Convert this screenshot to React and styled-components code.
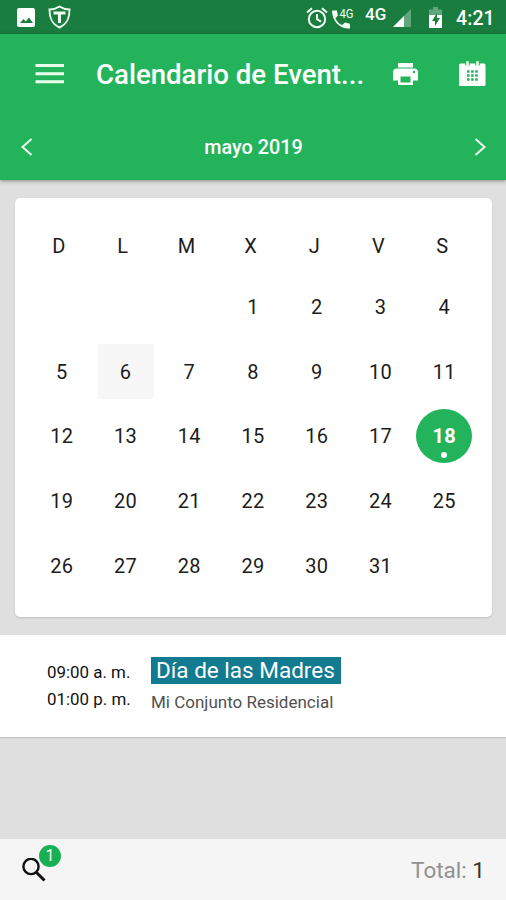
import React from 'react';
import styled, { createGlobalStyle } from 'styled-components';

const Global = createGlobalStyle`
  * { box-sizing: border-box; }
  body { margin: 0; background: #dfdfdf; font-family: Roboto, sans-serif; }
  svg { display: block; flex: none; }
`;

const Screen = styled.div`
  width: 506px;
  height: 900px;
  display: flex;
  flex-direction: column;
  overflow: hidden;
  background: #dfdfdf;
`;

const StatusBar = styled.div`
  height: 34px;
  flex: none;
  display: flex;
  align-items: flex-start;
  background: #197d3f;
  color: #fff;
`;

const StatusIcon = styled.svg`
  margin-left: ${(p) => p.$left}px;
  margin-top: ${(p) => p.$top}px;
`;

const Network = styled.span`
  width: 22px;
  margin: 5px 0 0 7px;
  font-size: 17px;
  font-weight: 500;
  line-height: 18px;
  letter-spacing: 0.2px;
  white-space: nowrap;
`;

const Clock = styled.span`
  margin: 8px 0 0 14px;
  font-size: 19.5px;
  font-weight: 500;
  line-height: 22px;
  letter-spacing: 0.1px;
`;

const Header = styled.header`
  height: 146px;
  flex: none;
  display: flex;
  flex-direction: column;
  background: #23b45b;
  color: #fff;
  box-shadow: 0 1px 4px rgba(0, 0, 0, 0.4);
`;

const Toolbar = styled.div`
  height: 80px;
  display: flex;
  align-items: center;
  padding: 0 20px 0 35px;
`;

const Title = styled.h1`
  width: 273px;
  margin: 2px 24px 0 31px;
  font-size: 27.6px;
  font-weight: 500;
  line-height: 36px;
  letter-spacing: 0;
  white-space: nowrap;
`;

const IconButton = styled.button`
  display: flex;
  padding: 0;
  margin: 0 ${(p) => p.$gap || 0}px 0 0;
  border: 0;
  background: none;
  color: inherit;
`;

const MonthBar = styled.div`
  height: 66px;
  display: flex;
  align-items: center;
  justify-content: space-between;
  padding: 0 20px 0 21px;
`;

const Month = styled.span`
  padding-top: 2px;
  font-size: 19.8px;
  font-weight: 500;
  line-height: 24px;
`;

const Card = styled.section`
  height: 419px;
  flex: none;
  margin: 18px 14px 0 15px;
  padding-top: 17px;
  background: #fff;
  border-radius: 5px;
  box-shadow: 0 1px 2px rgba(0, 0, 0, 0.15);
`;

const Week = styled.div`
  display: grid;
  grid-template-columns: repeat(7, ${(p) => (p.$head ? 63.9 : 63.75)}px);
  grid-auto-rows: ${(p) => (p.$head ? 62 : 64.65)}px;
  margin-left: ${(p) => (p.$head ? 12 : 15)}px;
  place-items: center;
  color: #1c1c1c;
  font-size: 20px;
  line-height: 24px;
  letter-spacing: 0.3px;
`;

const Days = styled(Week)`
  margin-top: -2.2px;
`;

const Day = styled.div`
  width: 56px;
  height: ${(p) => (p.$selected ? 54 : 55)}px;
  display: flex;
  flex-direction: column;
  align-items: center;
  justify-content: center;
  position: relative;
  border-radius: ${(p) => (p.$selected ? '50%' : '3px')};
  background: ${(p) => (p.$selected ? '#23b45b' : p.$today ? '#f7f7f7' : 'none')};
  color: ${(p) => (p.$selected ? '#fff' : 'inherit')};
  font-weight: ${(p) => (p.$selected ? 700 : 400)};
  margin-bottom: ${(p) => (p.$selected ? 1.6 : 0)}px;
`;

const Dot = styled.i`
  position: absolute;
  left: 25px;
  bottom: 5px;
  width: 6px;
  height: 6px;
  border-radius: 50%;
  background: #fff;
`;

const Event = styled.section`
  height: 102px;
  flex: none;
  margin-top: 18px;
  padding: 22px 0 0 47px;
  display: flex;
  background: #fff;
  box-shadow: 0 1px 1px rgba(0, 0, 0, 0.12);
`;

const Times = styled.div`
  width: 104px;
  padding-top: 2px;
  font-size: 16.9px;
  line-height: 27px;
  color: #111;
  white-space: nowrap;
`;

const Details = styled.div`
  display: flex;
  flex-direction: column;
  align-items: flex-start;
`;

const EventName = styled.span`
  width: 190px;
  height: 27px;
  padding-left: 5px;
  background: #127b90;
  color: #fff;
  font-size: 22.5px;
  line-height: 27px;
  white-space: nowrap;
`;

const Place = styled.span`
  margin-top: 8px;
  color: #505050;
  font-size: 17px;
  line-height: 20px;
  white-space: nowrap;
`;

const Footer = styled.footer`
  height: 61px;
  flex: none;
  margin-top: auto;
  display: flex;
  justify-content: space-between;
  padding: 0 21px 0 22px;
  background: #f5f5f5;
`;

const Search = styled.div`
  position: relative;
  padding-top: 19px;
`;

const Badge = styled.span`
  position: absolute;
  left: 17px;
  top: 6px;
  width: 22px;
  height: 22px;
  border-radius: 50%;
  background: #18b052;
  color: #fff;
  font-size: 16px;
  line-height: 22px;
  text-align: center;
`;

const Total = styled.span`
  margin-top: 17px;
  color: #909090;
  font-size: 22.5px;
  line-height: 28px;

  b { color: #333; font-weight: 400; }
`;

const DAYS = [null, null, null, ...Array.from({ length: 31 }, (_, i) => i + 1)];

export default function App() {
  return (
    <Screen>
      <Global />
      <StatusBar>
        <StatusIcon $left={17} $top={8} width="18" height="19" viewBox="0 0 18 19" fill="#fff">
          <path fillRule="evenodd" d="M2 0h14a2 2 0 0 1 2 2v15a2 2 0 0 1-2 2H2a2 2 0 0 1-2-2V2a2 2 0 0 1 2-2zM3 15h13l-4-5.500-3.200 4-2.300-2.600z" />
        </StatusIcon>
        <StatusIcon $left={13} $top={5} width="23" height="24" viewBox="0 0 23 24" fill="none" stroke="#f1fff2" strokeWidth="2">
          <path d="M11.500 1.500Q7 4.500 1.500 4.500C1.500 13 3.500 19 11.500 22.500C19.500 19 21.500 13 21.500 4.500Q16 4.500 11.500 1.500z" />
          <path d="M5.500 8h12M11.500 7v11" strokeWidth="3" />
        </StatusIcon>
        <StatusIcon $left={235} $top={7} width="22" height="22" viewBox="0 0 22 22" fill="none" stroke="#f1fff2" strokeWidth="2">
          <circle cx="11" cy="12" r="8.200" />
          <path d="M1 5.500 6 1.300M16 1.300l5 4.200M11 7v5.200l4 2.500" />
        </StatusIcon>
        <StatusIcon $left={4} $top={3} width="26" height="27" viewBox="0 -4 26 27" fill="#f1fff2">
          <path d="M0 3.500h4.800l1.200 5-2.600 2.700c1.500 3.300 3.700 5.500 6.800 6.900L13 15.500l5 1.200V21.500C8.500 22.500 0 14.500 0 3.500z" />
          <text x="7.500" y="11" fontSize="13" fontWeight="400" textLength="14" lengthAdjust="spacingAndGlyphs" fontFamily="Roboto">4G</text>
        </StatusIcon>
        <Network>4G</Network>
        <StatusIcon $left={6} $top={9} width="18" height="18" viewBox="0 0 18 18">
          <path d="M18 0v18H0z" fill="#62a77b" />
          <path d="M11 7v11H0z" fill="#fff" />
        </StatusIcon>
        <StatusIcon $left={18} $top={7} width="13" height="21" viewBox="0 0 13 21">
          <path d="M4 0h5v2.500h4V9H0V2.500h4z" fill="#62a77b" />
          <path d="M0 8h13v13H0z" fill="#fff" />
          <path d="M8 6 3 14h3v5l5-8H8z" fill="#197d3f" />
        </StatusIcon>
        <Clock>4:21</Clock>
      </StatusBar>
      <Header>
        <Toolbar>
          <IconButton aria-label="Menú">
            <svg width="30" height="20" viewBox="0 0 30 20" fill="#e9ffec">
              <path d="M.5 0H29v3H.5zM.5 8.300H29v3H.5zM.5 16.300H29v3H.5z" />
            </svg>
          </IconButton>
          <Title>Calendario de Event...</Title>
          <IconButton aria-label="Imprimir" $gap={41}>
            <svg width="25" height="23" viewBox="0 0 25 23" fill="#fff">
              <path fillRule="evenodd" d="M5 0h15v4.500H5zM4 5.500h17a4 4 0 0 1 4 4V17.500h-5V22H5v-4.500H0v-8a4 4 0 0 1 4-4zM7.500 13.500v6h10v-6zM19.800 9a1.200 1.200 0 1 0 2.400 0 1.200 1.200 0 1 0-2.400 0z" />
            </svg>
          </IconButton>
          <IconButton aria-label="Calendario">
            <svg width="27" height="26" viewBox="0 0 27 26">
              <rect y="2.500" width="26.500" height="22.500" rx="1.500" fill="#fff" />
              <path d="M8.500 0v4.500M18.500 0v4.500" stroke="#23b45b" strokeWidth="4.500" />
              <path d="M8.500 1v4M18.500 1v4" stroke="#eaffea" strokeWidth="2.500" strokeLinecap="round" />
              <path d="M8 10.500h11M8 14.500h11M8 18.500h11" stroke="#23b45b" strokeWidth="2.600" strokeDasharray="2.600 1.500" />
            </svg>
          </IconButton>
        </Toolbar>
        <MonthBar>
          <IconButton aria-label="Anterior">
            <svg width="12" height="18" viewBox="0 0 12 18" fill="none" stroke="#eaffed" strokeWidth="2"><path d="M10.500 1 1.500 9l9 8" /></svg>
          </IconButton>
          <Month>mayo 2019</Month>
          <IconButton aria-label="Siguiente">
            <svg width="12" height="18" viewBox="0 0 12 18" fill="none" stroke="#eaffed" strokeWidth="2"><path d="m1.500 1 9 8-9 8" /></svg>
          </IconButton>
        </MonthBar>
      </Header>
      <Card>
        <Week $head>
          {['D', 'L', 'M', 'X', 'J', 'V', 'S'].map((d) => <span key={d}>{d}</span>)}
        </Week>
        <Days>
          {DAYS.map((d, i) => (
            <Day key={i} $today={d === 6} $selected={d === 18}>
              {d}
              {d === 18 && <Dot />}
            </Day>
          ))}
        </Days>
      </Card>
      <Event>
        <Times>
          <div>09:00 a. m.</div>
          <div>01:00 p. m.</div>
        </Times>
        <Details>
          <EventName>Día de las Madres</EventName>
          <Place>Mi Conjunto Residencial</Place>
        </Details>
      </Event>
      <Footer>
        <Search>
          <svg width="24" height="24" viewBox="0 0 24 24" fill="none" stroke="#111">
            <circle cx="9" cy="8.500" r="7.600" strokeWidth="2.400" />
            <path d="m14 14 8.500 8.500" strokeWidth="3" />
          </svg>
          <Badge>1</Badge>
        </Search>
        <Total>Total: <b>1</b></Total>
      </Footer>
    </Screen>
  );
}
